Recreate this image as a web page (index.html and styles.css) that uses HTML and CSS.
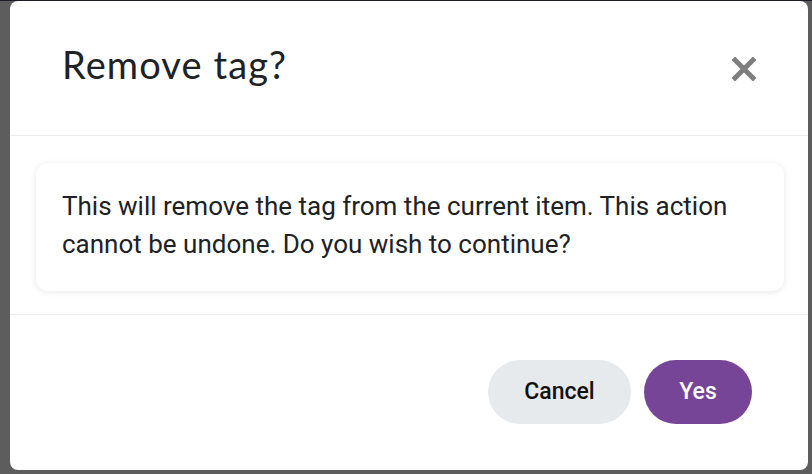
FILE: index.html
```html
<!DOCTYPE html>
<html lang="en">
<head>
    <meta charset="UTF-8">
    <meta name="viewport" content="width=device-width, initial-scale=1.0">
    <title>Remove tag</title>
    <link rel="stylesheet" href="styles.css">
</head>
<body>

<div class="backdrop">
    <!-- Confirm dialog -->
    <div class="modal">
        <div class="modal-header">
            <h2>Remove tag?</h2>
            <button class="close-btn" aria-label="Close">
                <svg width="24" height="24" viewBox="0 0 24 24">
                    <path d="M3 3 L21 21 M21 3 L3 21" stroke="#7f7f7f" stroke-width="5" stroke-linecap="square"/>
                </svg>
            </button>
        </div>

        <div class="modal-body">
            <div class="message-card">
                <p>This will remove the tag from the current item. This action cannot be undone. Do you wish to continue?</p>
            </div>
        </div>

        <div class="modal-footer">
            <button class="btn btn-cancel">Cancel</button>
            <button class="btn btn-yes">Yes</button>
        </div>
    </div>
</div>

</body>
</html>
```

FILE: styles.css
```css
body {
    margin: 0;
    padding: 0;
    background-color: #5d5d5d;
    font-family: Roboto, "Liberation Sans", sans-serif;
    color: #222;
}

.backdrop {
    height: 474px;
    border-top: 1px solid #1c1b28;
    box-sizing: border-box;
    padding: 0 4px 0 10px;
}

.modal {
    background-color: white;
    border-radius: 8px;
    height: 469px;
    display: flex;
    flex-direction: column;
}

.modal-header {
    height: 134px;
    display: flex;
    align-items: center;
    justify-content: space-between;
    padding: 0 52px 0 52px;
    border-bottom: 1px solid #ececec;
}

.modal-header h2 {
    margin: 0 0 8px 0;
    font-family: Lato, "Open Sans", sans-serif;
    font-weight: 400;
    font-size: 38px;
    letter-spacing: 1.1px;
    color: #202124;
}

.close-btn {
    background: none;
    border: none;
    padding: 0;
    margin-top: 2px;
    cursor: pointer;
    display: flex;
}

.modal-body {
    height: 179px;
    box-sizing: border-box;
    padding: 27px 24px 0 26px;
    border-bottom: 1px solid #ececec;
}

.message-card {
    border-radius: 12px;
    box-shadow: 0 1px 6px rgba(0, 0, 0, 0.1);
    padding: 24px 26px 28px 26px;
}

.message-card p {
    margin: 0;
    font-size: 26px;
    line-height: 38px;
    color: #202124;
}

.modal-footer {
    flex: 1;
    display: flex;
    align-items: center;
    justify-content: flex-end;
    gap: 13px;
    padding: 0 56px 2px 0;
}

.btn {
    height: 64px;
    border: none;
    border-radius: 32px;
    font-family: Roboto, sans-serif;
    font-weight: 500;
    font-size: 23px;
    cursor: pointer;
}

.btn-cancel {
    width: 143px;
    background-color: #e7eaed;
    color: #111;
}

.btn-yes {
    width: 108px;
    background-color: #764597;
    color: white;
}
```
